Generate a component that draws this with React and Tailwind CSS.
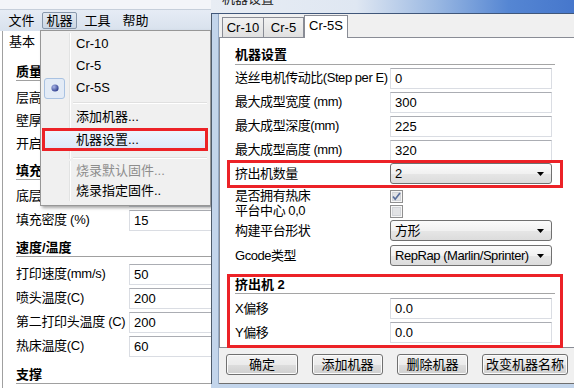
import React from "react"

const FONT = "font-[family-name:'Liberation_Sans','Noto_Sans_CJK_SC',sans-serif]"

function TextBox({ value, className = "" }) {
  return (
    <div className={`h-[21px] shrink-0 border border-[#dadde3] border-t-[#abadb3] bg-white pl-[4px] text-[13px] leading-[19px] text-black ${className}`}>
      {value}
    </div>
  )
}

function Arrow() {
  return (
    <svg width="7" height="4" viewBox="0 0 7 4">
      <path d="M0 0h7L3.5 4z" fill="#000" />
    </svg>
  )
}

function Combo({ value }) {
  return (
    <div className="flex h-[21px] w-[162px] shrink-0 items-center justify-between rounded-[3px] border border-[#707070] bg-[linear-gradient(#fbfbfb_0%,#f1f1f1_50%,#e6e6e6_51%,#dcdcdc_100%)] pl-[4px] pr-[7px] text-[13px] leading-[19px]">
      <span className="whitespace-nowrap tracking-[-0.45px]">{value}</span>
      <Arrow />
    </div>
  )
}

function Check({ checked }) {
  return (
    <svg width="13" height="13" viewBox="0 0 13 13">
      <rect x="0.5" y="0.5" width="12" height="12" fill="#f6f6f6" stroke="#8f8f8f" />
      <rect x="2.5" y="2.5" width="8" height="8" fill="#e2e3e5" stroke="#d2d4d8" />
      {checked && <path d="M3 6.5 5.2 9.2 10 3" fill="none" stroke="#5a6f9c" strokeWidth="1.7" />}
    </svg>
  )
}

function Btn({ children, className = "" }) {
  return (
    <div className={`flex h-[21px] shrink-0 items-center justify-center rounded-[3px] border border-[#707070] bg-[linear-gradient(#f2f2f2_0%,#ebebeb_50%,#dddddd_51%,#cfcfcf_100%)] text-[13px] shadow-[inset_0_0_0_1px_#fbfbfb] ${className}`}>
      {children}
    </div>
  )
}

function DRow({ label, children, className = "" }) {
  return (
    <div className={`flex items-center ${className}`}>
      <div className="w-[155px] shrink-0 whitespace-nowrap text-[13px] leading-[14px] tracking-[-0.45px]">{label}</div>
      {children}
    </div>
  )
}

function LRow({ label, value, className = "h-[24px]" }) {
  return (
    <div className={`flex items-center ${className}`}>
      <div className="w-[113px] shrink-0 overflow-hidden whitespace-nowrap text-[13px] tracking-[-0.3px]">{label}</div>
      <TextBox value={value} className="w-[90px]" />
    </div>
  )
}

function LHead({ children, className = "" }) {
  return (
    <div className={`h-[17px] shrink-0 border-b border-[#a0a0a0] text-[13px] font-bold leading-[16px] ${className}`}>
      {children}
    </div>
  )
}

function MItem({ children, icon, disabled, className = "h-[22px]" }) {
  return (
    <div className={`flex ${className}`}>
      <div className="flex w-[29px] shrink-0 items-center border-r border-[#e2e3e3] pl-[3px] shadow-[1px_0_0_#ffffff]">{icon}</div>
      <div className={`flex items-center pl-[6px] text-[13px] ${disabled ? "text-[#8d8d8d]" : "text-black"}`}>{children}</div>
    </div>
  )
}

function MSep({ className = "h-[7px] items-center" }) {
  return (
    <div className={`flex ${className}`}>
      <div className="h-full w-[29px] shrink-0 border-r border-[#e2e3e3] shadow-[1px_0_0_#ffffff]" />
      <div className="ml-[3px] mr-[3px] h-[2px] flex-1 border-t border-b border-t-[#e0e0e0] border-b-white" />
    </div>
  )
}

function MachineMenu() {
  return (
    <div className="absolute left-[40px] top-[30px] flex w-[171px] flex-col border border-[#979797] bg-[#f0f0f0] pb-[4px] pt-[2px] shadow-[2px_2px_3px_rgba(0,0,0,0.35)]">
      <MItem>Cr-10</MItem>
      <MItem>Cr-5</MItem>
      <MItem
        icon={
          <div className="flex h-[21px] w-[21px] items-center justify-center rounded-[3px] border border-[#a9c2e2] bg-[#e3ebf6]">
            <svg width="8" height="8" viewBox="0 0 8 8">
              <defs>
                <radialGradient id="dot" cx="35%" cy="35%" r="70%">
                  <stop offset="0%" stopColor="#a9b6e8" />
                  <stop offset="100%" stopColor="#2c3b8c" />
                </radialGradient>
              </defs>
              <circle cx="4" cy="4" r="3.6" fill="url(#dot)" />
            </svg>
          </div>
        }
      >
        Cr-5S
      </MItem>
      <MSep />
      <MItem>添加机器...</MItem>
      <div className="ml-[1px] mr-[2px] flex h-[23px] items-center border-[3px] border-[#ec2227] bg-[linear-gradient(#eef4fc,#dde9f9)] pl-[31px] text-[13px]">
        机器设置...
      </div>
      <MSep className="h-[10px] items-end pb-[2px]" />
      <MItem disabled className="h-[20px]">烧录默认固件...</MItem>
      <MItem className="h-[20px]">烧录指定固件..</MItem>
    </div>
  )
}

function MainWindow() {
  return (
    <div className="relative flex h-full w-[211px] shrink-0 flex-col overflow-hidden">
      <div className="h-[10px] shrink-0 border-b border-[#c6cfdb] bg-[#f3f5f9]" />
      <div className="flex h-[21px] shrink-0 items-center gap-[3px] bg-[linear-gradient(#e6ecf5,#d8e1ed)] pl-[4px] text-[13px]">
        <div className="flex h-[17px] w-[35px] items-center justify-center">文件</div>
        <div className="flex h-[17px] w-[35px] items-center justify-center rounded-[2px] border border-[#8797ab] bg-[linear-gradient(#e3e9f1,#cbd6e4)]">机器</div>
        <div className="flex h-[17px] w-[35px] items-center justify-center">工具</div>
        <div className="flex h-[17px] w-[35px] items-center justify-center">帮助</div>
      </div>
      <div className="ml-[2px] flex flex-1 flex-col border-l border-[#a0a0a0] bg-white pl-[13px]">
        <div className="-ml-[7px] flex h-[22px] shrink-0 items-center text-[13px]">基本</div>
        <LHead className="mt-[11px]">质量</LHead>
        <LRow label="层高" value="" className="mt-[5px] h-[23px]" />
        <LRow label="壁厚" value="" className="h-[23px]" />
        <LRow label="开启" value="" className="h-[23px]" />
        <LHead className="mt-[8px]">填充</LHead>
        <LRow label="底层" value="" className="mt-[4px] h-[24px]" />
        <LRow label="填充密度 (%)" value="15" />
        <LHead className="mt-[8px]">速度/温度</LHead>
        <LRow label="打印速度(mm/s)" value="50" className="mt-[5px] h-[24px]" />
        <LRow label="喷头温度(C)" value="200" />
        <LRow label="第二打印头温度 (C)" value="200" />
        <LRow label="热床温度(C)" value="60" />
        <LHead className="mt-[9px]">支撑</LHead>
      </div>
      <MachineMenu />
    </div>
  )
}

function SettingsDialog() {
  return (
    <div className="flex h-full w-[363px] shrink-0 flex-col">
      <div className="h-[14px] shrink-0 overflow-hidden border-b border-[#40577a] bg-[linear-gradient(to_right,#e8edf4_0%,#dfe7f2_40%,#9ab8e2_62%,#5586d3_82%,#4677cc_100%)] pl-[11px]">
        <div className="-mt-[9px] text-[13px] leading-[16px] text-[#222]">机器设置</div>
      </div>
      <div className="flex min-h-0 flex-1">
        <div className="w-[8px] shrink-0 border-l border-r border-l-[#4e5b6b] border-r-[#94a9c4] bg-[#c3d5eb]" />
        <div className="flex flex-1 flex-col border-b border-[#6f6f6f] bg-[#f0f0f0]">
          <div className="flex h-[23px] shrink-0 items-end pl-[3px] text-[13px]">
            <div className="flex h-[20px] w-[42px] items-center justify-center border border-b-0 border-[#898c95] bg-[linear-gradient(#f2f2f2,#e0e0e0)]">Cr-10</div>
            <div className="-ml-[1px] flex h-[20px] w-[41px] items-center justify-center border border-b-0 border-[#898c95] bg-[linear-gradient(#f2f2f2,#e0e0e0)]">Cr-5</div>
            <div className="relative z-10 -mb-[1px] flex h-[23px] w-[44px] items-center justify-center border border-b-0 border-[#898c95] bg-white pb-[3px]">Cr-5S</div>
          </div>
          <div className="h-[311px] shrink-0 border-y border-l border-[#898c95] bg-white pl-[15px]">
            <div className="flex w-[317px] flex-col">
              <div className="mt-[8px] h-[19px] w-[320px] shrink-0 border-b border-[#a5a5a5] text-[13px] font-bold leading-[18px]">机器设置</div>
              <DRow label="送丝电机传动比(Step per E)" className="mt-[3px] h-[20px]">
                <TextBox value="0" className="h-[20px] w-[162px] leading-[18px]" />
              </DRow>
              <DRow label="最大成型宽度 (mm)" className="mt-[4px] h-[20px]">
                <TextBox value="300" className="h-[20px] w-[162px] leading-[18px]" />
              </DRow>
              <DRow label="最大成型深度(mm)" className="mt-[4px] h-[20px]">
                <TextBox value="225" className="h-[20px] w-[162px] leading-[18px]" />
              </DRow>
              <DRow label="最大成型高度 (mm)" className="mt-[4px] h-[20px]">
                <TextBox value="320" className="h-[20px] w-[162px] leading-[18px]" />
              </DRow>
              <div className="-ml-[8px] -mr-[11px] border-[3px] border-[#ec2227] pb-[1px] pl-[5px] pr-[8px]">
                <DRow label="挤出机数量" className="h-[21px]">
                  <Combo value="2" />
                </DRow>
              </div>
              <DRow label="是否拥有热床" className="mt-[1px] h-[14px]">
                <Check checked />
              </DRow>
              <DRow label="平台中心 0,0" className="mt-[1px] h-[14px]">
                <Check />
              </DRow>
              <DRow label="构建平台形状" className="mt-[2px] h-[21px]">
                <Combo value="方形" />
              </DRow>
              <DRow label="Gcode类型" className="mt-[4px] h-[21px]">
                <Combo value="RepRap (Marlin/Sprinter)" />
              </DRow>
              <div className="-ml-[8px] -mr-[11px] mt-[8px] flex flex-col border-[3px] border-[#ec2227] pb-[2px] pl-[5px] pr-[8px]">
                <div className="h-[17px] w-[320px] shrink-0 border-b border-[#a5a5a5] text-[13px] font-bold leading-[16px]">挤出机 2</div>
                <DRow label="X偏移" className="mt-[4px] h-[21px]">
                  <TextBox value="0.0" className="w-[162px]" />
                </DRow>
                <DRow label="Y偏移" className="mt-[3px] h-[21px]">
                  <TextBox value="0.0" className="w-[162px]" />
                </DRow>
              </div>
            </div>
          </div>
          <div className="mt-[6px] flex gap-[14px] pl-[7px]">
            <Btn className="w-[72px]">确定</Btn>
            <Btn className="w-[71px]">添加机器</Btn>
            <Btn className="w-[71px]">删除机器</Btn>
            <Btn className="w-[86px]">改变机器名称</Btn>
          </div>
        </div>
      </div>
      <div className="h-[4px] shrink-0 bg-[#c3d5eb]" />
    </div>
  )
}

export default function App() {
  return (
    <div className={`relative flex h-[388px] w-[574px] overflow-hidden bg-white text-black ${FONT}`}>
      <MainWindow />
      <SettingsDialog />
    </div>
  )
}
